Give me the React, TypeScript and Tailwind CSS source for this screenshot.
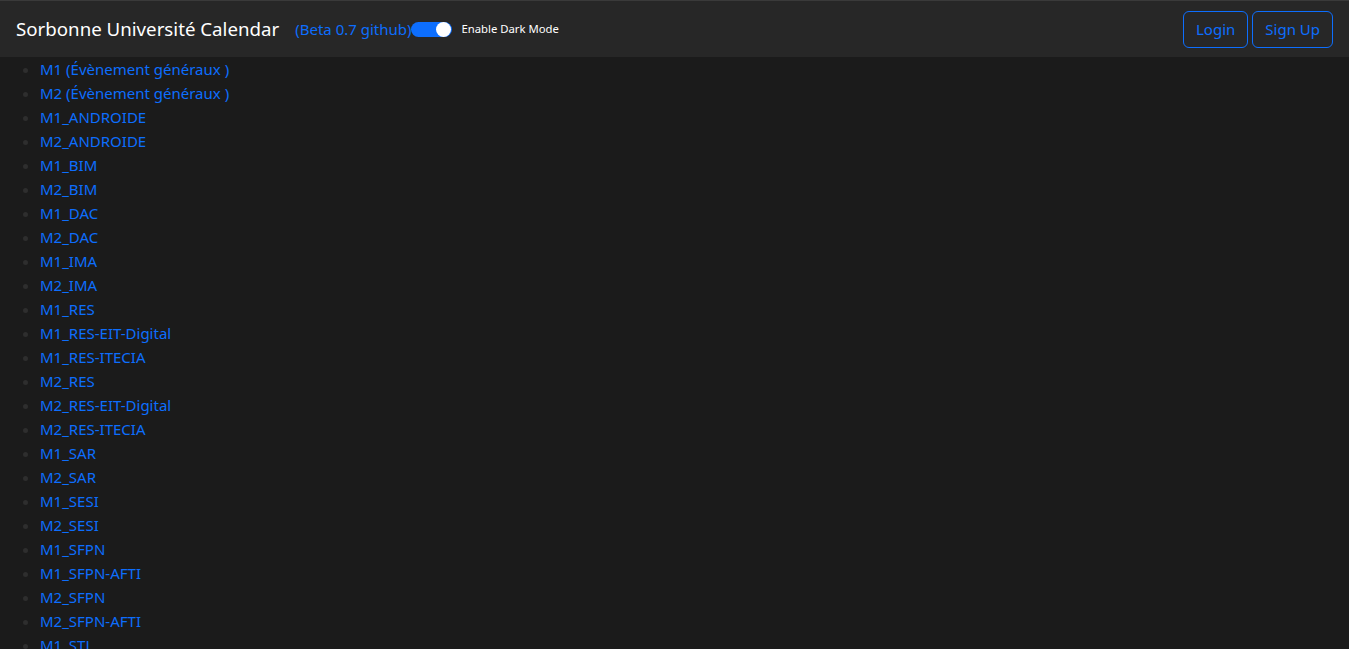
const ITEMS = [
  "M1 (Évènement généraux )",
  "M2 (Évènement généraux )",
  "M1_ANDROIDE",
  "M2_ANDROIDE",
  "M1_BIM",
  "M2_BIM",
  "M1_DAC",
  "M2_DAC",
  "M1_IMA",
  "M2_IMA",
  "M1_RES",
  "M1_RES-EIT-Digital",
  "M1_RES-ITECIA",
  "M2_RES",
  "M2_RES-EIT-Digital",
  "M2_RES-ITECIA",
  "M1_SAR",
  "M2_SAR",
  "M1_SESI",
  "M2_SESI",
  "M1_SFPN",
  "M1_SFPN-AFTI",
  "M2_SFPN",
  "M2_SFPN-AFTI",
  "M1_STL",
  "M2_STL",
  "M1_STL-INSTA",
  "M2_STL-INSTA",
];

export default function App() {
  return (
    <div className="min-h-screen bg-[#1b1b1b] font-['Noto_Sans',sans-serif] text-white">
      <nav className="flex h-[57px] items-center justify-between border-t border-[#3a3a3a] bg-[#272727] px-4">
        <div className="flex items-center">
          <a href="#" className="text-[18.7px] leading-none text-white">
            Sorbonne Université Calendar
          </a>
          <a href="#" className="ml-4 text-[15px] text-[#0d6efd]">
            (Beta 0.7 github)
          </a>
          <label className="flex items-center">
            <span className="relative inline-block h-[15px] w-[41px] rounded-full bg-[#0d6efd]">
              <span className="absolute right-[1px] top-[0px] h-[15px] w-[15px] rounded-full bg-white" />
            </span>
            <span className="ml-[9px] text-[11.3px] text-white">Enable Dark Mode</span>
          </label>
        </div>
        <div className="flex items-center gap-1">
          <button className="h-[37px] rounded-[6px] border border-[#0d6efd] px-[12px] text-[15px] text-[#0d6efd]">
            Login
          </button>
          <button className="h-[37px] rounded-[6px] border border-[#0d6efd] px-[12px] text-[15px] text-[#0d6efd]">
            Sign Up
          </button>
        </div>
      </nav>
      <ul className="list-disc pl-10 text-[15px] leading-6 marker:text-[#2e2e2e]">
        {ITEMS.map((item) => (
          <li key={item}>
            <a href="#" className="text-[#0d6efd]">
              {item}
            </a>
          </li>
        ))}
      </ul>
    </div>
  );
}
